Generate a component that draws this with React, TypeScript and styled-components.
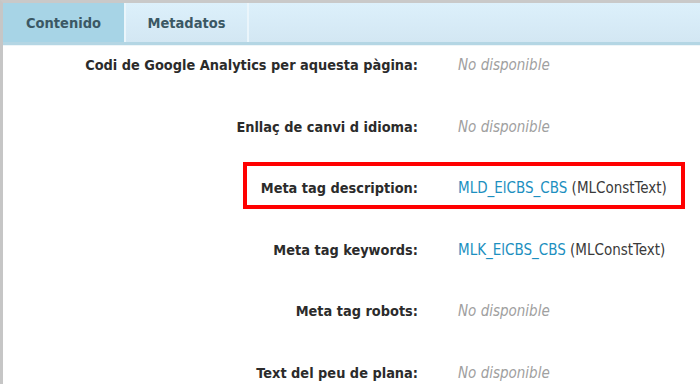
import React from 'react'
import styled, { createGlobalStyle } from 'styled-components'

const GlobalStyle = createGlobalStyle`
  html, body {
    margin: 0;
    padding: 0;
    background: #ffffff;
  }
  body {
    font-family: 'DejaVu Sans Condensed', 'DejaVu Sans', sans-serif;
  }
`

const Frame = styled.div`
  width: 700px;
  height: 384px;
  overflow: hidden;
  border-top: 3px solid #c9c9c9;
  border-left: 3px solid #c6c6c6;
  box-sizing: border-box;
  background: #fff;
`

const TabBar = styled.div`
  display: flex;
  height: 39px;
  background: linear-gradient(#dcf0fb, #d3e7f3);
  border-bottom: 3px solid #b4d6e4;
  box-shadow: 0 1px 0 #eef5f8;
`

const Tab = styled.div<{ $active?: boolean }>`
  width: 121px;
  display: flex;
  align-items: center;
  justify-content: center;
  font-size: 14.5px;
  font-weight: bold;
  color: #3b5864;
  background: ${(p) => (p.$active ? '#a7d4e6' : 'transparent')};
  border-right: 2px solid #eaf5fb;
`

const Content = styled.div`
  display: flex;
  flex-direction: column;
  gap: 41.6px;
  padding-top: 10px;
`

const Row = styled.div<{ $highlight?: boolean }>`
  position: relative;
  display: grid;
  grid-template-columns: 415px 1fr;
  column-gap: 40px;
  line-height: 20px;
  font-size: 14.4px;

  ${(p) =>
    p.$highlight &&
    `
    &::after {
      content: '';
      position: absolute;
      left: 240px;
      width: 434px;
      top: -16px;
      height: 39px;
      border: 4px solid #ff0000;
      pointer-events: none;
    }
  `}
`

const Label = styled.div`
  text-align: right;
  font-weight: bold;
  color: #2b2b2b;
  white-space: nowrap;
`

const Value = styled.div`
  color: #3a3a3a;
  font-size: 15px;
  white-space: nowrap;
`

const Missing = styled.span`
  font-style: italic;
  color: #a0a0a0;
`

const Key = styled.span`
  color: #1c8fc0;
`

type Field = {
  label: string
  key?: string
  type?: string
}

const fields: Field[] = [
  { label: 'Codi de Google Analytics per aquesta pàgina:' },
  { label: 'Enllaç de canvi d idioma:' },
  { label: 'Meta tag description:', key: 'MLD_ElCBS_CBS', type: 'MLConstText' },
  { label: 'Meta tag keywords:', key: 'MLK_ElCBS_CBS', type: 'MLConstText' },
  { label: 'Meta tag robots:' },
  { label: 'Text del peu de plana:' },
]

const App = () => (
  <>
    <GlobalStyle />
    <Frame>
      <TabBar>
        <Tab $active>Contenido</Tab>
        <Tab>Metadatos</Tab>
      </TabBar>
      <Content>
        {fields.map((f, i) => (
          <Row key={f.label} $highlight={i === 2}>
            <Label>{f.label}</Label>
            <Value>
              {f.key ? (
                <>
                  <Key>{f.key}</Key> ({f.type})
                </>
              ) : (
                <Missing>No disponible</Missing>
              )}
            </Value>
          </Row>
        ))}
      </Content>
    </Frame>
  </>
)

export default App
